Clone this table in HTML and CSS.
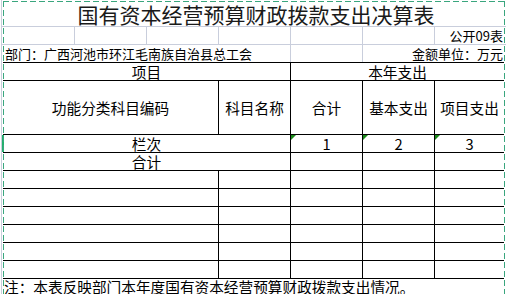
FILE: index.html
```html
<!DOCTYPE html>
<html lang="zh-CN">
<head>
<meta charset="utf-8">
<title>国有资本经营预算财政拨款支出决算表</title>
<link rel="stylesheet" href="styles.css">
</head>
<body>
<div class="sheet">
  <div class="title">国有资本经营预算财政拨款支出决算表</div>
  <div class="row row2">
    <div class="gc"></div><div class="gc"></div><div class="gc"></div><div class="gc"></div><div class="gc"></div><div class="gc"></div>
    <div class="gc last right">公开09表</div>
  </div>
  <div class="row row3">
    <div class="gc span4 left">部门：广西河池市环江毛南族自治县总工会</div>
    <div class="gc"></div>
    <div class="gc last span2 right">金额单位：万元</div>
  </div>
  <div class="table">
    <div class="c span2">项目</div>
    <div class="c span3">本年支出</div>
    <div class="c">功能分类科目编码</div>
    <div class="c">科目名称</div>
    <div class="c">合计</div>
    <div class="c">基本支出</div>
    <div class="c">项目支出</div>
    <div class="c span2">栏次</div>
    <div class="c flag">1</div>
    <div class="c flag">2</div>
    <div class="c flag">3</div>
    <div class="c span2">合计</div>
    <div class="c"></div><div class="c"></div><div class="c"></div>
    <div class="c"></div><div class="c"></div><div class="c"></div><div class="c"></div><div class="c"></div>
    <div class="c"></div><div class="c"></div><div class="c"></div><div class="c"></div><div class="c"></div>
    <div class="c"></div><div class="c"></div><div class="c"></div><div class="c"></div><div class="c"></div>
    <div class="c"></div><div class="c"></div><div class="c"></div><div class="c"></div><div class="c"></div>
    <div class="c"></div><div class="c"></div><div class="c"></div><div class="c"></div><div class="c"></div>
    <div class="c"></div><div class="c"></div><div class="c"></div><div class="c"></div><div class="c"></div>
  </div>
  <div class="note">注：本表反映部门本年度国有资本经营预算财政拨款支出情况。</div>
  <div class="sel-mark"></div>
  <div class="print-area"></div>
</div>
</body>
</html>
```
FILE: styles.css
```css
* { box-sizing: border-box; }
html, body { margin: 0; padding: 0; }
body {
  width: 506px;
  height: 294px;
  overflow: hidden;
  background: #fff;
  color: #000;
  font-family: "Noto Sans CJK SC", "Noto Sans", sans-serif;
}
.sheet {
  position: relative;
  margin-left: 1px;
  border-left: 1px solid #c9cedc;
  height: 294px;
}
.title {
  height: 27px;
  border-bottom: 1px solid #c9cedc;
  font-size: 21px;
  line-height: 28px;
  text-align: center;
  padding-left: 4px;
  color: #1a1a1a;
  white-space: nowrap;
}
.row {
  display: grid;
  grid-template-columns: 73px 72px 72px 72px 72px 72px 1fr;
  font-size: 13px;
  line-height: 18px;
  white-space: nowrap;
}
.row2 {
  height: 18px;
  border-bottom: 1px solid #c9cedc;
}
.row3 {
  height: 17px;
  line-height: 17px;
}
.gc {
  border-right: 1px solid #c9cedc;
  height: 100%;
}
.gc.last { border-right: none; }
.span4 { grid-column: span 4; }
.span2 { grid-column: span 2; }
.span3 { grid-column: span 3; }
.right { text-align: right; padding-right: 3px; }
.left { text-align: left; padding-left: 3px; }

.table {
  margin-left: 1px;
  width: 501px;
  display: grid;
  grid-template-columns: 215px 71px 71px 71px 69px;
  grid-template-rows: 17px 53px 17px 17px repeat(6, 17px);
  gap: 1px;
  padding: 1px 0;
  background: #000;
  font-size: 14.67px;
}
.table .c {
  background: #fff;
  display: flex;
  align-items: center;
  justify-content: center;
  line-height: 17px;
  white-space: nowrap;
  position: relative;
}
.table .flag::before {
  content: "";
  position: absolute;
  left: 0;
  top: 0;
  border-top: 5px solid #1b8a1b;
  border-right: 5px solid transparent;
}
.note {
  font-size: 14.67px;
  line-height: 16px;
  padding-left: 2px;
  white-space: nowrap;
}
.sel-mark {
  position: absolute;
  left: 0;
  top: 135px;
  width: 2px;
  height: 17px;
  background: #22b06c;
}
.print-area {
  position: absolute;
  left: 1px;
  top: 1px;
  width: 502px;
  height: 293px;
  pointer-events: none;
  background:
    repeating-linear-gradient(90deg, #3aa67e 0 6px, transparent 6px 9px) top left / 100% 1px no-repeat,
    repeating-linear-gradient(180deg, #3aa67e 0 6px, transparent 6px 9px) top left / 1px 100% no-repeat,
    repeating-linear-gradient(180deg, #3aa67e 0 6px, transparent 6px 9px) top right / 1px 100% no-repeat;
}
```
